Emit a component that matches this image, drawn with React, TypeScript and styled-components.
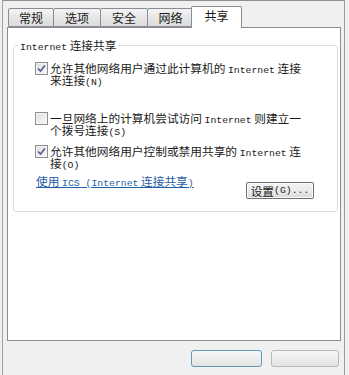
import React from "react";
import styled, { createGlobalStyle } from "styled-components";

const Global = createGlobalStyle`
  html, body { margin: 0; padding: 0; }
  body {
    background: #f0f0f0;
    width: 349px;
    height: 375px;
    overflow: hidden;
    font-family: "Noto Sans CJK SC", "Liberation Sans", sans-serif;
    color: #1e1e1e;
  }
`;

const Window = styled.div`
  box-sizing: border-box;
  width: 343px;
  height: 375px;
  margin-left: 2px;
  border-top: 1px solid #8e8e8e;
  border-left: 1px solid #a3a3a3;
  border-right: 1px solid #9a9a9a;
  padding: 5px 2px 0 4px;
  background: #f0f0f0;
  display: flex;
  flex-direction: column;
`;

const TabRow = styled.div`
  display: flex;
  align-items: flex-end;
  height: 21px;
  margin-left: 1px;
  position: relative;
  z-index: 1;
`;

const Tab = styled.div<{ $active?: boolean; $w: number }>`
  box-sizing: border-box;
  width: ${(p) => p.$w}px;
  height: ${(p) => (p.$active ? 22 : 19)}px;
  margin-right: -1px;
  margin-left: ${(p) => (p.$active ? -2 : 0)}px;
  margin-bottom: ${(p) => (p.$active ? -1 : 0)}px;
  border: 1px solid #898c95;
  border-bottom: ${(p) => (p.$active ? "none" : "1px solid #898c95")};
  border-radius: 2px 2px 0 0;
  background: ${(p) =>
    p.$active ? "#ffffff" : "linear-gradient(#f4f4f4, #e6e6e6 50%, #dcdcdc)"};
  display: flex;
  align-items: center;
  justify-content: center;
  padding-bottom: ${(p) => (p.$active ? 4 : 0)}px;
  font-size: 12px;
  line-height: 12px;
  color: #1a1a1a;
  position: relative;
  z-index: ${(p) => (p.$active ? 2 : 1)};
`;

const Panel = styled.div`
  box-sizing: border-box;
  width: 334px;
  height: 314px;
  border: 1px solid #898c95;
  background: #ffffff;
  padding: 11px 2px 0 5px;
`;

const Group = styled.fieldset`
  box-sizing: border-box;
  margin: 0;
  border: 1px solid #d5dfe5;
  border-radius: 3px;
  padding: 0 0 12px 4px;
  min-width: 0;
`;

const Legend = styled.legend`
  padding: 0 2px;
  font-size: 11.7px;
  line-height: 12px;
  color: #1a1a1a;
`;

const Lat = styled.span`
  font-family: "Liberation Mono", monospace;
  font-size: 9.8px;
  line-height: 0;
`;

const Item = styled.div<{ $mt: number }>`
  display: flex;
  align-items: flex-start;
  gap: 2px;
  margin-top: ${(p) => p.$mt}px;
  margin-left: 17px;
`;

const Box = styled.span`
  box-sizing: border-box;
  flex: none;
  width: 13px;
  height: 13px;
  border: 1px solid #8f8f8f;
  background: linear-gradient(135deg, #dcdcdc, #fbfbfb);
  box-shadow: inset 0 0 0 1px #f4f4f4;
  display: flex;
  align-items: center;
  justify-content: center;
`;

const Label = styled.div`
  font-size: 11.7px;
  line-height: 12px;
  color: #1a1a1a;
  white-space: nowrap;
`;

const Line = styled.div`
  height: 12px;
  line-height: 12px;
`;

const ActionRow = styled.div`
  display: flex;
  align-items: flex-start;
  margin: 5px 0 0 18px;
`;

const Link = styled.a`
  font-size: 11.7px;
  line-height: 12px;
  height: 13px;
  color: #1f5ea8;
  text-decoration: underline;
  white-space: nowrap;
  margin-top: 1px;
`;

const PushButton = styled.button`
  box-sizing: border-box;
  width: 68px;
  height: 17px;
  margin: 8px 0 0 auto;
  margin-right: 23px;
  padding: 0;
  border: 1px solid #707070;
  border-radius: 2px;
  background: linear-gradient(#f3f3f3, #ebebeb 50%, #dadada);
  box-shadow: inset 0 0 0 1px #fbfbfb;
  font-family: "Noto Sans CJK SC", sans-serif;
  font-size: 11.7px;
  line-height: 13px;
  color: #1a1a1a;
  display: flex;
  align-items: center;
  justify-content: center;
`;

const Footer = styled.div`
  display: flex;
  justify-content: flex-end;
  gap: 9px;
  margin-top: 9px;
  margin-right: 3px;
`;

const FootButton = styled.div<{ $focus?: boolean; $w: number }>`
  box-sizing: border-box;
  width: ${(p) => p.$w}px;
  height: 17px;
  border: 1px solid ${(p) => (p.$focus ? "#5c9bb8" : "#b9b9b9")};
  border-radius: 3px;
  background: linear-gradient(#f7f7f7, #e4e4e4);
`;

const Check = ({ on }: { on?: boolean }) => (
  <Box>
    {on && (
      <svg width="9" height="9" viewBox="0 0 9 9">
        <path d="M1 4.5 L3.5 7 L8 1.5" fill="none" stroke="#4a5d8e" strokeWidth="1.6" />
      </svg>
    )}
  </Box>
);

export default function App() {
  return (
    <>
      <Global />
      <Window>
        <TabRow>
          <Tab $w={46}>常规</Tab>
          <Tab $w={48}>选项</Tab>
          <Tab $w={48}>安全</Tab>
          <Tab $w={47}>网络</Tab>
          <Tab $w={51} $active>共享</Tab>
        </TabRow>
        <Panel>
          <Group>
            <Legend>
              <Lat>Internet</Lat> 连接共享
            </Legend>
            <Item $mt={11}>
              <Check on />
              <Label>
                <Line>
                  允许其他网络用户通过此计算机的 <Lat>Internet</Lat> 连接
                </Line>
                <Line>
                  来连接<Lat>(N)</Lat>
                </Line>
              </Label>
            </Item>
            <Item $mt={26}>
              <Check />
              <Label>
                <Line>
                  一旦网络上的计算机尝试访问 <Lat>Internet</Lat> 则建立一
                </Line>
                <Line>
                  个拨号连接<Lat>(S)</Lat>
                </Line>
              </Label>
            </Item>
            <Item $mt={9}>
              <Check on />
              <Label>
                <Line>
                  允许其他网络用户控制或禁用共享的 <Lat>Internet</Lat> 连
                </Line>
                <Line>
                  接<Lat>(O)</Lat>
                </Line>
              </Label>
            </Item>
            <ActionRow>
              <Link href="#">
                使用 <Lat>ICS (Internet</Lat> 连接共享<Lat>)</Lat>
              </Link>
              <PushButton>
                设置<Lat>(G)...</Lat>
              </PushButton>
            </ActionRow>
          </Group>
        </Panel>
        <Footer>
          <FootButton $w={71} $focus />
          <FootButton $w={68} />
        </Footer>
      </Window>
    </>
  );
}
